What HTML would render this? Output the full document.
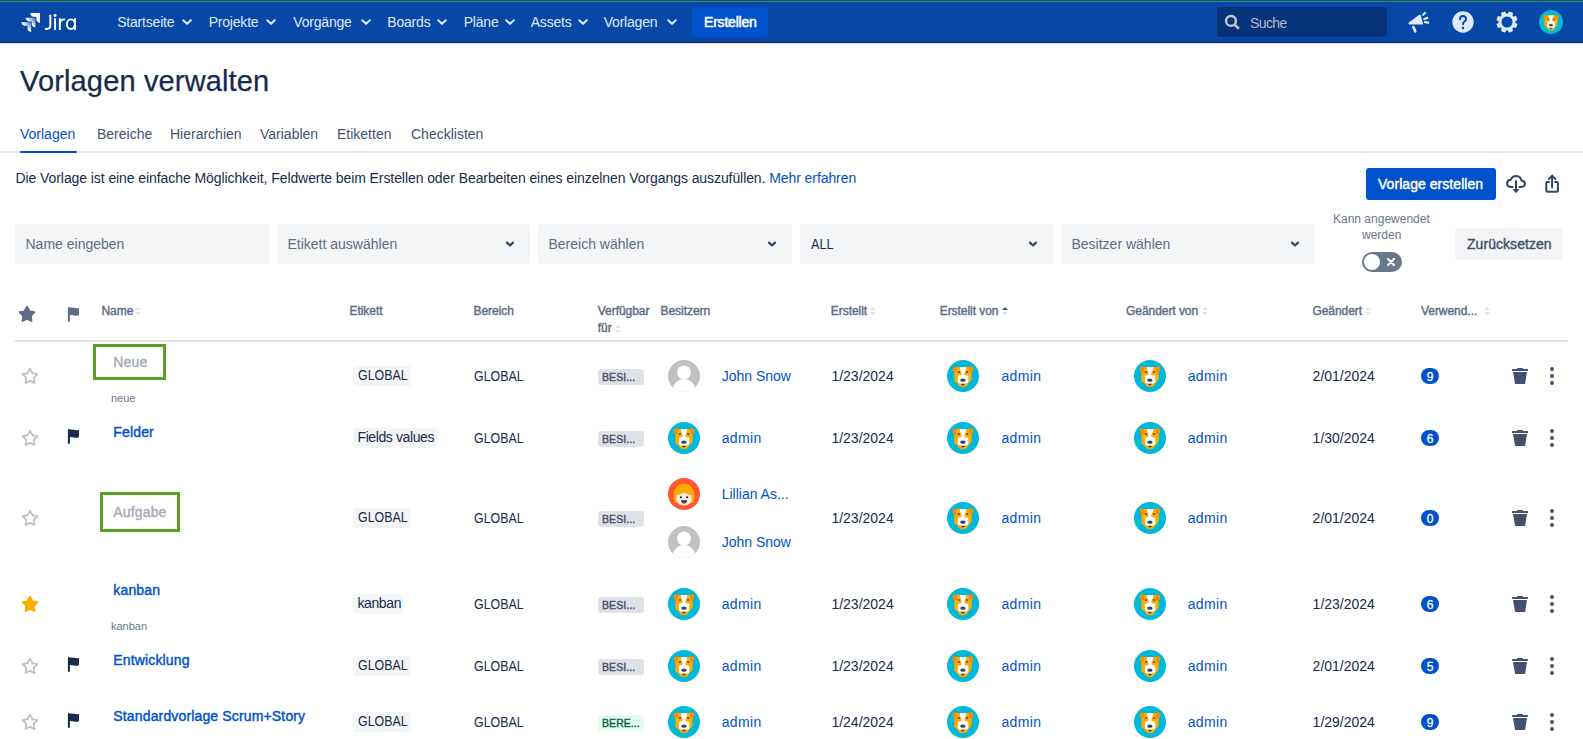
<!DOCTYPE html>
<html><head><meta charset="utf-8"><title>Vorlagen verwalten</title>
<style>
html,body{margin:0;padding:0;width:1583px;height:739px;overflow:hidden;background:#fff;}
body{position:relative;font-family:"Liberation Sans",sans-serif;}
.a{position:absolute;}
.t{position:absolute;white-space:nowrap;}
.tag{background:#F4F5F7;border-radius:3px;}
svg.a{overflow:visible;}
</style></head><body>
<svg width="0" height="0" style="position:absolute">
<defs>
<symbol id="dog" viewBox="0 0 32 32">
<circle cx="16" cy="16" r="16" fill="#00B8D9"/>
<path d="M8.4 7.1 L23.6 7.1 L24.7 12.5 L24.6 19.8 L21.2 23.6 L19.7 26.3 Q15.9 28 12.1 26.3 L10.7 23.6 L7.3 21.3 L7.3 12.5 Z" fill="#FFAB00"/>
<path d="M5.6 8.6 Q5.7 6.5 8.2 6.5 L10 6.8 L9.8 12.3 L7.2 12.3 Q5.6 11.5 5.6 8.6 Z" fill="#FF8B00"/>
<path d="M26.4 8.6 Q26.3 6.3 23.8 6.3 L22 6.8 L22.2 12.3 L24.8 12.3 Q26.4 11.5 26.4 8.6 Z" fill="#FF8B00"/>
<path d="M12.9 7.1 L19.2 7.1 L18.9 9.5 L17.4 12.7 L17.6 14.9 L21.3 15.8 L21.3 22.3 L19.6 23.6 L12.2 23.6 L10.9 22.3 L10.9 15.8 L14.4 14.9 L14.6 12.7 L13.2 9.5 Z" fill="#FFFFFF"/>
<rect x="10.9" y="10.9" width="2" height="2" rx="0.5" fill="#505F79"/>
<rect x="19.2" y="10.9" width="2" height="2" rx="0.5" fill="#505F79"/>
<ellipse cx="15.9" cy="20.2" rx="2.7" ry="1.6" fill="#344563"/>
<path d="M14.1 24.1 Q15.9 23.5 17.7 24.1 Q17 25.6 15.9 25.6 Q14.8 25.6 14.1 24.1 Z" fill="#344563"/>
</symbol>
<symbol id="user" viewBox="0 0 32 32">
<clipPath id="uc"><circle cx="16" cy="16" r="16"/></clipPath>
<circle cx="16" cy="16" r="16" fill="#C1C1C1"/>
<g clip-path="url(#uc)"><circle cx="16" cy="12.5" r="6.9" fill="#fff"/><ellipse cx="16" cy="30.6" rx="11.4" ry="11.6" fill="#fff"/></g>
</symbol>
<symbol id="lil" viewBox="0 0 32 32">
<circle cx="16" cy="16" r="16" fill="#FF5630"/>
<path d="M5.6 21 Q4.4 18.3 5.9 16 Q5 12.3 8.2 10.6 Q8.7 6.6 12.6 6.2 Q16 4.6 19.4 6.2 Q23.3 6.6 23.8 10.6 Q27 12.3 26.1 16 Q27.6 18.3 26.4 21 L25.2 24.8 L6.8 24.8 Z" fill="#FFAB00"/>
<path d="M8.3 17.2 Q11 16.8 13.6 15.8 L16 14.2 L18.4 15.8 Q21 16.8 23.7 17.2 L23.7 21 Q23.2 27.4 16 27.5 Q8.8 27.4 8.3 21 Z" fill="#FFEBE6"/>
<circle cx="12.9" cy="19.3" r="1.15" fill="#253858"/><circle cx="19.1" cy="19.3" r="1.15" fill="#253858"/>
<path d="M13.1 22.2 L19.1 22.2 Q18.8 25.4 16.1 25.4 Q13.4 25.4 13.1 22.2 Z" fill="#253858"/>
<path d="M14.6 24.5 Q16.1 23.3 17.6 24.5 Q16.9 25.4 16.1 25.4 Q15.3 25.4 14.6 24.5 Z" fill="#DE350B"/>
</symbol>
<symbol id="staro" viewBox="0 0 20 20">
<path d="M10.00 2.70 L12.57 7.30 L17.38 8.05 L13.85 11.80 L14.49 17.04 L10.00 14.90 L5.51 17.04 L6.15 11.80 L2.62 8.05 L7.43 7.30 Z" fill="none" stroke="#C1C1C1" stroke-width="1.8" stroke-linejoin="round"/>
</symbol>
<symbol id="jiralogo" viewBox="0 0 22 21">
<radialGradient id="jg1" cx="1" cy="0" r="1.0"><stop offset="0.15" stop-color="#fff" stop-opacity="0.35"/><stop offset="0.8" stop-color="#fff" stop-opacity="1"/></radialGradient>
<path d="M10 1.1 L19.9 1.1 L19.9 10.9 Q17.2 10.5 16.4 8.3 L16.4 5.6 Q16.4 4.7 15.5 4.7 L13.1 4.7 Q10.8 4.3 10 1.1 Z" fill="#fff"/>
<path d="M10 1.1 L19.9 1.1 L19.9 10.9 Q17.2 10.5 16.4 8.3 L16.4 5.6 Q16.4 4.7 15.5 4.7 L13.1 4.7 Q10.8 4.3 10 1.1 Z" transform="translate(-4.6 4.7)" fill="url(#jg1)"/>
<path d="M10 1.1 L19.9 1.1 L19.9 10.9 Q17.2 10.5 16.4 8.3 L16.4 5.6 Q16.4 4.7 15.5 4.7 L13.1 4.7 Q10.8 4.3 10 1.1 Z" transform="translate(-8.8 9.1)" fill="url(#jg1)"/>
</symbol>
<symbol id="megaphone" viewBox="0 0 30 26">
<path d="M4.8 13.6 L15 6 Q16.2 5.3 16.8 6.5 L19 14.4 Q19.2 15.6 18 15.6 L5.6 15.6 Q3.8 15.4 4.8 13.6 Z" fill="#DEEBFF"/>
<path d="M9.3 18 L11.3 22.4" stroke="#DEEBFF" stroke-width="2.6" stroke-linecap="round"/>
<path d="M19.1 5.8 L21.1 3.9 M20.3 10 L23.4 8.9 M20.9 13.1 L24.2 13.6" stroke="#DEEBFF" stroke-width="2.2" stroke-linecap="round"/>
</symbol>
<symbol id="gear" viewBox="0 0 22 22">
<g fill="#DEEBFF">
<circle cx="11" cy="11" r="8.5"/>

</g>
<g fill="#DEEBFF" transform="rotate(22.5 11 11)"><rect x="8.6" y="0.35" width="4.8" height="5" rx="1.2"/><rect x="8.6" y="16.65" width="4.8" height="5" rx="1.2"/><rect x="0.35" y="8.6" width="5" height="4.8" rx="1.2"/><rect x="16.65" y="8.6" width="5" height="4.8" rx="1.2"/></g>
<g fill="#DEEBFF" transform="rotate(67.5 11 11)"><rect x="8.6" y="0.35" width="4.8" height="5" rx="1.2"/><rect x="8.6" y="16.65" width="4.8" height="5" rx="1.2"/><rect x="0.35" y="8.6" width="5" height="4.8" rx="1.2"/><rect x="16.65" y="8.6" width="5" height="4.8" rx="1.2"/></g>
<circle cx="11" cy="11" r="5.55" fill="#0747A6"/>
</symbol>
<symbol id="cloud" viewBox="0 0 24 24">
<path d="M8.6 14.9 L6.6 14.9 Q3.1 14.7 3.1 11.2 Q3.3 7.8 6.8 7.7 Q8.3 3.9 12.3 3.9 Q16.6 4.1 17.4 8.4 Q21 9.1 21 12 Q20.8 14.9 17.4 14.9 L15.4 14.9" fill="none" stroke="#344563" stroke-width="2" stroke-linecap="round" stroke-linejoin="round"/>
<path d="M12 9 L12 18.6" stroke="#344563" stroke-width="2" stroke-linecap="round"/>
<path d="M9.2 17.4 L12 20.7 L14.8 17.4 Z" fill="#344563" stroke="#344563" stroke-width="0.9" stroke-linejoin="round"/>
</symbol>
<symbol id="share" viewBox="0 0 20 24">
<path d="M7 10 L5.3 10 Q4.3 10 4.3 11 L4.3 18.7 Q4.3 19.7 5.3 19.7 L14.9 19.7 Q15.9 19.7 15.9 18.7 L15.9 11 Q15.9 10 14.9 10 L13.2 10" fill="none" stroke="#344563" stroke-width="2" stroke-linecap="round" stroke-linejoin="round"/>
<path d="M10.1 4.2 L10.1 15.4" stroke="#344563" stroke-width="2" stroke-linecap="round"/>
<path d="M6.8 7.1 L10.1 3.6 L13.4 7.1" fill="none" stroke="#344563" stroke-width="2" stroke-linecap="round" stroke-linejoin="round"/>
</symbol>
</defs></svg>
<div class="a" style="left:0px;top:0px;width:1583px;height:43px;background:#0747A6;"></div>
<div class="a" style="left:0px;top:0px;width:1583px;height:1px;background:#035A5C;"></div>
<div class="a" style="left:0px;top:1px;width:1583px;height:1px;background:#3F8082;"></div>
<div class="a" style="left:0px;top:42px;width:1583px;height:1px;background:#1C2D55;"></div>
<div class="a" style="left:0px;top:43px;width:1583px;height:1px;background:#D9DADF;"></div>
<svg class="a" style="left:20px;top:12px;" width="22" height="21" viewBox="0 0 22 21"><use href="#jiralogo"/></svg>
<svg class="a" style="left:40px;top:8px;" width="44" height="28" viewBox="0 0 44 28"><g fill="none" stroke="#fff" stroke-width="1.95"><path d="M10.35 6.8 L10.35 17.6 Q10.35 21 6.9 21 L4.9 21"/><path d="M15.05 10.3 L15.05 22"/><path d="M19.85 10.3 L19.85 22 M19.85 15.6 Q19.85 11.35 25.2 11.35"/><ellipse cx="30.9" cy="16.15" rx="4.0" ry="4.8"/><path d="M35.0 10.3 L35.0 22"/></g><circle cx="15.1" cy="7.5" r="1.4" fill="#fff"/></svg>
<div class="t " style="left:117.2px;top:15.15px;font-size:14px;line-height:14px;color:#DEEBFF;font-weight:400;letter-spacing:-0.2px">Startseite</div>
<svg class="a" style="left:181px;top:16px" width="12" height="12" viewBox="0 0 12 12"><path d="M2.2 4.2 L6 7.8 L9.8 4.2" fill="none" stroke="#DEEBFF" stroke-width="2" stroke-linecap="round" stroke-linejoin="round"/></svg>
<div class="t " style="left:208.7px;top:15.15px;font-size:14px;line-height:14px;color:#DEEBFF;font-weight:400;letter-spacing:-0.2px">Projekte</div>
<svg class="a" style="left:265px;top:16px" width="12" height="12" viewBox="0 0 12 12"><path d="M2.2 4.2 L6 7.8 L9.8 4.2" fill="none" stroke="#DEEBFF" stroke-width="2" stroke-linecap="round" stroke-linejoin="round"/></svg>
<div class="t " style="left:293.3px;top:15.15px;font-size:14px;line-height:14px;color:#DEEBFF;font-weight:400;letter-spacing:-0.2px">Vorgänge</div>
<svg class="a" style="left:359.5px;top:16px" width="12" height="12" viewBox="0 0 12 12"><path d="M2.2 4.2 L6 7.8 L9.8 4.2" fill="none" stroke="#DEEBFF" stroke-width="2" stroke-linecap="round" stroke-linejoin="round"/></svg>
<div class="t " style="left:387.3px;top:15.15px;font-size:14px;line-height:14px;color:#DEEBFF;font-weight:400;letter-spacing:-0.2px">Boards</div>
<svg class="a" style="left:436px;top:16px" width="12" height="12" viewBox="0 0 12 12"><path d="M2.2 4.2 L6 7.8 L9.8 4.2" fill="none" stroke="#DEEBFF" stroke-width="2" stroke-linecap="round" stroke-linejoin="round"/></svg>
<div class="t " style="left:463.7px;top:15.15px;font-size:14px;line-height:14px;color:#DEEBFF;font-weight:400;letter-spacing:-0.2px">Pläne</div>
<svg class="a" style="left:503.5px;top:16px" width="12" height="12" viewBox="0 0 12 12"><path d="M2.2 4.2 L6 7.8 L9.8 4.2" fill="none" stroke="#DEEBFF" stroke-width="2" stroke-linecap="round" stroke-linejoin="round"/></svg>
<div class="t " style="left:530.7px;top:15.15px;font-size:14px;line-height:14px;color:#DEEBFF;font-weight:400;letter-spacing:-0.2px">Assets</div>
<svg class="a" style="left:576.5px;top:16px" width="12" height="12" viewBox="0 0 12 12"><path d="M2.2 4.2 L6 7.8 L9.8 4.2" fill="none" stroke="#DEEBFF" stroke-width="2" stroke-linecap="round" stroke-linejoin="round"/></svg>
<div class="t " style="left:603.7px;top:15.15px;font-size:14px;line-height:14px;color:#DEEBFF;font-weight:400;letter-spacing:-0.2px">Vorlagen</div>
<svg class="a" style="left:665.5px;top:16px" width="12" height="12" viewBox="0 0 12 12"><path d="M2.2 4.2 L6 7.8 L9.8 4.2" fill="none" stroke="#DEEBFF" stroke-width="2" stroke-linecap="round" stroke-linejoin="round"/></svg>
<div class="a" style="left:692px;top:7px;width:76px;height:30px;background:#0052CC;border-radius:3px"></div>
<div class="t " style="left:704px;top:15.15px;font-size:14px;line-height:14px;color:#FFFFFF;font-weight:400;-webkit-text-stroke-width:0.42px;letter-spacing:-0.2px;-webkit-text-stroke-width:0.5px">Erstellen</div>
<div class="a" style="left:1217px;top:7px;width:170px;height:30px;background:#07337A;border-radius:3px"></div>
<svg class="a" style="left:1223px;top:13px;" width="18" height="18" viewBox="0 0 18 18"><circle cx="8" cy="7.9" r="4.9" fill="none" stroke="#C1C7D0" stroke-width="2.5"/><path d="M11.7 11.6 L15.1 15" stroke="#C1C7D0" stroke-width="2.6" stroke-linecap="round"/></svg>
<div class="t " style="left:1250px;top:16.15px;font-size:14px;line-height:14px;color:#B3BAC5;font-weight:400;letter-spacing:-0.6px">Suche</div>
<svg class="a" style="left:1404px;top:9px;" width="30" height="26" viewBox="0 0 30 26"><use href="#megaphone"/></svg>
<svg class="a" style="left:1452px;top:11px;" width="22" height="22" viewBox="0 0 22 22"><circle cx="11" cy="11" r="10.7" fill="#DEEBFF"/><path d="M8 8.3 Q8.1 5.1 11 5.1 Q14 5.2 14 7.9 Q14 9.6 12.5 10.5 Q11 11.4 11 13.3" fill="none" stroke="#0747A6" stroke-width="2" stroke-linecap="round"/><circle cx="11" cy="16.9" r="1.25" fill="#0747A6"/></svg>
<svg class="a" style="left:1496px;top:11px;" width="22" height="22" viewBox="0 0 22 22"><use href="#gear"/></svg>
<svg class="a" style="left:1539.0px;top:10.0px" width="24" height="24" viewBox="0 0 32 32"><use href="#dog"/></svg>
<div class="t " style="left:20px;top:66.95px;font-size:29px;line-height:29px;color:#172B4D;font-weight:400;letter-spacing:0.15px;-webkit-text-stroke-width:0.25px">Vorlagen verwalten</div>
<div class="t " style="left:20px;top:126.65px;font-size:14px;line-height:14px;color:#0052CC;font-weight:400;">Vorlagen</div>
<div class="t " style="left:97px;top:126.65px;font-size:14px;line-height:14px;color:#42526E;font-weight:400;">Bereiche</div>
<div class="t " style="left:170px;top:126.65px;font-size:14px;line-height:14px;color:#42526E;font-weight:400;">Hierarchien</div>
<div class="t " style="left:260px;top:126.65px;font-size:14px;line-height:14px;color:#42526E;font-weight:400;">Variablen</div>
<div class="t " style="left:337px;top:126.65px;font-size:14px;line-height:14px;color:#42526E;font-weight:400;">Etiketten</div>
<div class="t " style="left:411px;top:126.65px;font-size:14px;line-height:14px;color:#42526E;font-weight:400;">Checklisten</div>
<div class="a" style="left:0px;top:151px;width:1583px;height:2px;background:#EBECF0;"></div>
<div class="a" style="left:20px;top:151px;width:57px;height:2px;background:#0052CC;border-radius:1px"></div>
<div class="t " style="left:15.5px;top:170.95px;font-size:14px;line-height:14px;color:#172B4D;font-weight:400;letter-spacing:-0.08px;white-space:nowrap">Die Vorlage ist eine einfache Möglichkeit, Feldwerte beim Erstellen oder Bearbeiten eines einzelnen Vorgangs auszufüllen. <span style="color:#0052CC">Mehr erfahren</span></div>
<div class="a" style="left:1366px;top:168px;width:130px;height:32px;background:#0052CC;border-radius:3px"></div>
<div class="t " style="left:1378px;top:177.15px;font-size:14px;line-height:14px;color:#FFFFFF;font-weight:400;-webkit-text-stroke-width:0.42px;letter-spacing:0.05px">Vorlage erstellen</div>
<svg class="a" style="left:1504px;top:172px;" width="24" height="24" viewBox="0 0 24 24"><use href="#cloud"/></svg>
<svg class="a" style="left:1542px;top:172px;" width="20" height="24" viewBox="0 0 20 24"><use href="#share"/></svg>
<div class="a" style="left:15px;top:224px;width:254px;height:40px;background:#F4F5F7;border-radius:3px"></div>
<div class="t " style="left:25.5px;top:237.15px;font-size:14px;line-height:14px;color:#5E6C84;font-weight:400;">Name eingeben</div>
<div class="a" style="left:277px;top:224px;width:253px;height:40px;background:#F4F5F7;border-radius:3px"></div>
<div class="t " style="left:287.5px;top:237.15px;font-size:14px;line-height:14px;color:#5E6C84;font-weight:400;">Etikett auswählen</div>
<svg class="a" style="left:504px;top:238px" width="12" height="12" viewBox="0 0 12 12"><path d="M3 4.6 L6 7.5 L9 4.6" fill="none" stroke="#344563" stroke-width="2.2" stroke-linecap="round" stroke-linejoin="round"/></svg>
<div class="a" style="left:538px;top:224px;width:254px;height:40px;background:#F4F5F7;border-radius:3px"></div>
<div class="t " style="left:548.5px;top:237.15px;font-size:14px;line-height:14px;color:#5E6C84;font-weight:400;">Bereich wählen</div>
<svg class="a" style="left:766px;top:238px" width="12" height="12" viewBox="0 0 12 12"><path d="M3 4.6 L6 7.5 L9 4.6" fill="none" stroke="#344563" stroke-width="2.2" stroke-linecap="round" stroke-linejoin="round"/></svg>
<div class="a" style="left:800px;top:224px;width:253px;height:40px;background:#F4F5F7;border-radius:3px"></div>
<div class="t " style="left:810.5px;top:237.15px;font-size:14px;line-height:14px;color:#172B4D;font-weight:400;transform:scaleX(0.9);transform-origin:0 0">ALL</div>
<svg class="a" style="left:1027px;top:238px" width="12" height="12" viewBox="0 0 12 12"><path d="M3 4.6 L6 7.5 L9 4.6" fill="none" stroke="#344563" stroke-width="2.2" stroke-linecap="round" stroke-linejoin="round"/></svg>
<div class="a" style="left:1061px;top:224px;width:254px;height:40px;background:#F4F5F7;border-radius:3px"></div>
<div class="t " style="left:1071.5px;top:237.15px;font-size:14px;line-height:14px;color:#5E6C84;font-weight:400;">Besitzer wählen</div>
<svg class="a" style="left:1289px;top:238px" width="12" height="12" viewBox="0 0 12 12"><path d="M3 4.6 L6 7.5 L9 4.6" fill="none" stroke="#344563" stroke-width="2.2" stroke-linecap="round" stroke-linejoin="round"/></svg>
<div class="t " style="left:1333px;top:212.54px;font-size:12px;line-height:12px;color:#6B778C;font-weight:400;">Kann angewendet</div>
<div class="t " style="left:1362px;top:228.64px;font-size:12px;line-height:12px;color:#6B778C;font-weight:400;">werden</div>
<div class="a" style="left:1362px;top:252px;width:40px;height:20px;background:#6B778C;border-radius:10px"></div>
<div class="a" style="left:1364px;top:254px;width:16px;height:16px;border-radius:50%;background:#fff"></div>
<svg class="a" style="left:1385px;top:256px;" width="12" height="12" viewBox="0 0 12 12"><path d="M3 3 L9 9 M9 3 L3 9" stroke="#fff" stroke-width="2.1" stroke-linecap="round"/></svg>
<div class="a" style="left:1455px;top:228px;width:108px;height:31.5px;background:#F4F5F7;border-radius:3px"></div>
<div class="t " style="left:1467px;top:237.15px;font-size:14px;line-height:14px;color:#42526E;font-weight:400;-webkit-text-stroke-width:0.42px;letter-spacing:0.05px">Zurücksetzen</div>
<svg class="a" style="left:17px;top:304px" width="20" height="20" viewBox="0 0 20 20"><path d="M10.00 2.70 L12.57 7.30 L17.38 8.05 L13.85 11.80 L14.49 17.04 L10.00 14.90 L5.51 17.04 L6.15 11.80 L2.62 8.05 L7.43 7.30 Z" fill="#5E6C84" stroke="#5E6C84" stroke-width="1.8" stroke-linejoin="round"/></svg>
<svg class="a" style="left:67.5px;top:306.5px" width="12" height="15" viewBox="0 0 12 15"><path d="M0.9 1 L0.9 14" stroke="#5E6C84" stroke-width="2" stroke-linecap="round"/><path d="M0.9 0.6 Q3 0.2 6 0.8 Q9 1.4 11 0.9 L11 8.3 Q9 8.9 6 8.4 Q3 7.8 0.9 8.2 Z" fill="#5E6C84"/></svg>
<div class="t hd" style="left:101.5px;top:304.84px;font-size:12px;line-height:12px;color:#5E6C84;font-weight:400;-webkit-text-stroke-width:0.42px;letter-spacing:-0.05px">Name</div>
<div class="t hd" style="left:349.5px;top:304.84px;font-size:12px;line-height:12px;color:#5E6C84;font-weight:400;-webkit-text-stroke-width:0.42px;letter-spacing:-0.05px">Etikett</div>
<div class="t hd" style="left:473.5px;top:304.84px;font-size:12px;line-height:12px;color:#5E6C84;font-weight:400;-webkit-text-stroke-width:0.42px;letter-spacing:-0.05px">Bereich</div>
<div class="t hd" style="left:597.8px;top:304.84px;font-size:12px;line-height:12px;color:#5E6C84;font-weight:400;-webkit-text-stroke-width:0.42px;letter-spacing:-0.05px">Verfügbar</div>
<div class="t hd" style="left:660.5px;top:304.84px;font-size:12px;line-height:12px;color:#5E6C84;font-weight:400;-webkit-text-stroke-width:0.42px;letter-spacing:-0.05px">Besitzern</div>
<div class="t hd" style="left:830.8px;top:304.84px;font-size:12px;line-height:12px;color:#5E6C84;font-weight:400;-webkit-text-stroke-width:0.42px;letter-spacing:-0.05px">Erstellt</div>
<div class="t hd" style="left:939.7px;top:304.84px;font-size:12px;line-height:12px;color:#5E6C84;font-weight:400;-webkit-text-stroke-width:0.42px;letter-spacing:-0.05px">Erstellt von</div>
<div class="t hd" style="left:1126px;top:304.84px;font-size:12px;line-height:12px;color:#5E6C84;font-weight:400;-webkit-text-stroke-width:0.42px;letter-spacing:-0.05px">Geändert von</div>
<div class="t hd" style="left:1312.4px;top:304.84px;font-size:12px;line-height:12px;color:#5E6C84;font-weight:400;-webkit-text-stroke-width:0.42px;letter-spacing:-0.05px">Geändert</div>
<div class="t hd" style="left:1421px;top:304.84px;font-size:12px;line-height:12px;color:#5E6C84;font-weight:400;-webkit-text-stroke-width:0.42px;letter-spacing:-0.05px">Verwend...</div>
<div class="t " style="left:597.8px;top:322.24px;font-size:12px;line-height:12px;color:#5E6C84;font-weight:400;-webkit-text-stroke-width:0.42px;letter-spacing:-0.05px">für</div>
<svg class="a" style="left:134px;top:306px" width="8" height="10" viewBox="0 0 8 10"><path d="M1 4 L4 1 L7 4 Z" fill="#DFE1E6"/><path d="M1 6 L4 9 L7 6 Z" fill="#DFE1E6"/></svg>
<svg class="a" style="left:614px;top:324px" width="8" height="10" viewBox="0 0 8 10"><path d="M1 4 L4 1 L7 4 Z" fill="#DFE1E6"/><path d="M1 6 L4 9 L7 6 Z" fill="#DFE1E6"/></svg>
<svg class="a" style="left:869px;top:306px" width="8" height="10" viewBox="0 0 8 10"><path d="M1 4 L4 1 L7 4 Z" fill="#DFE1E6"/><path d="M1 6 L4 9 L7 6 Z" fill="#DFE1E6"/></svg>
<svg class="a" style="left:1001px;top:306px" width="8" height="10" viewBox="0 0 8 10"><path d="M1 4 L4 1 L7 4 Z" fill="#42526E"/><path d="M1 6 L4 9 L7 6 Z" fill="#DFE1E6"/></svg>
<svg class="a" style="left:1201px;top:306px" width="8" height="10" viewBox="0 0 8 10"><path d="M1 4 L4 1 L7 4 Z" fill="#DFE1E6"/><path d="M1 6 L4 9 L7 6 Z" fill="#DFE1E6"/></svg>
<svg class="a" style="left:1364px;top:306px" width="8" height="10" viewBox="0 0 8 10"><path d="M1 4 L4 1 L7 4 Z" fill="#DFE1E6"/><path d="M1 6 L4 9 L7 6 Z" fill="#DFE1E6"/></svg>
<svg class="a" style="left:1483px;top:306px" width="8" height="10" viewBox="0 0 8 10"><path d="M1 4 L4 1 L7 4 Z" fill="#DFE1E6"/><path d="M1 6 L4 9 L7 6 Z" fill="#DFE1E6"/></svg>
<div class="a" style="left:15px;top:340px;width:1553px;height:2px;background:#DFE1E6;"></div>
<svg class="a" style="left:20px;top:366px" width="20" height="20" viewBox="0 0 20 20"><use href="#staro"/></svg>
<div class="a" style="left:93px;top:344px;width:67px;height:30px;border:3px solid #5B9F24"></div>
<div class="t " style="left:113.3px;top:355.15px;font-size:14px;line-height:14px;color:#A5ADBA;font-weight:400;-webkit-text-stroke-width:0.42px;letter-spacing:0.15px">Neue</div>
<div class="t " style="left:111px;top:393.09px;font-size:11px;line-height:11px;color:#6B778C;font-weight:400;">neue</div>
<div class="a tag" style="left:352.7px;top:366px;width:58px;height:19.5px;"></div>
<div class="t " style="left:357.5px;top:368.05px;font-size:14px;line-height:14px;color:#172B4D;font-weight:400;transform:scaleX(0.885);transform-origin:0 0">GLOBAL</div>
<div class="t " style="left:473.7px;top:368.75px;font-size:14px;line-height:14px;color:#172B4D;font-weight:400;transform:scaleX(0.885);transform-origin:0 0">GLOBAL</div>
<div class="a" style="left:598px;top:369px;width:46px;height:15.5px;background:#DFE1E6;border-radius:3px"></div>
<div class="t " style="left:602px;top:371.79px;font-size:11px;line-height:11px;color:#42526E;font-weight:400;-webkit-text-stroke-width:0.42px;transform:scaleX(0.95);transform-origin:0 0;letter-spacing:0.1px">BESI...</div>
<svg class="a" style="left:668.0px;top:360.0px" width="32" height="32" viewBox="0 0 32 32"><use href="#user"/></svg>
<div class="t " style="left:721.7px;top:368.75px;font-size:14px;line-height:14px;color:#0052CC;font-weight:400;">John Snow</div>
<div class="t " style="left:831.4px;top:368.75px;font-size:14px;line-height:14px;color:#172B4D;font-weight:400;">1/23/2024</div>
<svg class="a" style="left:947.0px;top:360.0px" width="32" height="32" viewBox="0 0 32 32"><use href="#dog"/></svg>
<div class="t " style="left:1001.4px;top:368.75px;font-size:14px;line-height:14px;color:#0052CC;font-weight:400;letter-spacing:0.35px">admin</div>
<svg class="a" style="left:1134.0px;top:360.0px" width="32" height="32" viewBox="0 0 32 32"><use href="#dog"/></svg>
<div class="t " style="left:1187.7px;top:368.75px;font-size:14px;line-height:14px;color:#0052CC;font-weight:400;letter-spacing:0.35px">admin</div>
<div class="t " style="left:1312.6px;top:368.75px;font-size:14px;line-height:14px;color:#172B4D;font-weight:400;">2/01/2024</div>
<div class="a" style="left:1421px;top:367.7px;width:18px;height:16px;background:#0052CC;border-radius:8px"></div>
<div class="t" style="left:1421px;top:368.6px;width:18px;text-align:center;font-size:12px;line-height:16px;color:#fff;font-weight:400;-webkit-text-stroke-width:0.3px">9</div>
<svg class="a" style="left:1512px;top:368px" width="16" height="18" viewBox="0 0 16 18"><rect x="5" y="0" width="6" height="1.8" rx="0.6" fill="#42526E"/><rect x="0" y="1" width="16" height="2" rx="0.7" fill="#42526E"/><path d="M1 4 L15 4 L13.1 16 L3.1 16 Z" fill="#42526E"/></svg>
<svg class="a" style="left:1548px;top:366px" width="8" height="20" viewBox="0 0 8 20"><circle cx="4" cy="2.9" r="2" fill="#42526E"/><circle cx="4" cy="10" r="2" fill="#42526E"/><circle cx="4" cy="17" r="2" fill="#42526E"/></svg>
<svg class="a" style="left:20px;top:428px" width="20" height="20" viewBox="0 0 20 20"><use href="#staro"/></svg>
<svg class="a" style="left:67.8px;top:428.5px" width="12" height="15" viewBox="0 0 12 15"><path d="M0.9 1 L0.9 14" stroke="#172B4D" stroke-width="2" stroke-linecap="round"/><path d="M0.9 0.6 Q3 0.2 6 0.8 Q9 1.4 11 0.9 L11 8.3 Q9 8.9 6 8.4 Q3 7.8 0.9 8.2 Z" fill="#172B4D"/></svg>
<div class="t " style="left:113.3px;top:425.35px;font-size:14px;line-height:14px;color:#0052CC;font-weight:400;-webkit-text-stroke-width:0.42px;letter-spacing:0.15px">Felder</div>
<div class="a tag" style="left:352.7px;top:428px;width:84.5px;height:19.5px;"></div>
<div class="t " style="left:357.5px;top:430.05px;font-size:14px;line-height:14px;color:#172B4D;font-weight:400;letter-spacing:-0.4px">Fields values</div>
<div class="t " style="left:473.7px;top:430.75px;font-size:14px;line-height:14px;color:#172B4D;font-weight:400;transform:scaleX(0.885);transform-origin:0 0">GLOBAL</div>
<div class="a" style="left:598px;top:431px;width:46px;height:15.5px;background:#DFE1E6;border-radius:3px"></div>
<div class="t " style="left:602px;top:433.79px;font-size:11px;line-height:11px;color:#42526E;font-weight:400;-webkit-text-stroke-width:0.42px;transform:scaleX(0.95);transform-origin:0 0;letter-spacing:0.1px">BESI...</div>
<svg class="a" style="left:668.0px;top:422.0px" width="32" height="32" viewBox="0 0 32 32"><use href="#dog"/></svg>
<div class="t " style="left:721.7px;top:430.75px;font-size:14px;line-height:14px;color:#0052CC;font-weight:400;letter-spacing:0.35px">admin</div>
<div class="t " style="left:831.4px;top:430.75px;font-size:14px;line-height:14px;color:#172B4D;font-weight:400;">1/23/2024</div>
<svg class="a" style="left:947.0px;top:422.0px" width="32" height="32" viewBox="0 0 32 32"><use href="#dog"/></svg>
<div class="t " style="left:1001.4px;top:430.75px;font-size:14px;line-height:14px;color:#0052CC;font-weight:400;letter-spacing:0.35px">admin</div>
<svg class="a" style="left:1134.0px;top:422.0px" width="32" height="32" viewBox="0 0 32 32"><use href="#dog"/></svg>
<div class="t " style="left:1187.7px;top:430.75px;font-size:14px;line-height:14px;color:#0052CC;font-weight:400;letter-spacing:0.35px">admin</div>
<div class="t " style="left:1312.6px;top:430.75px;font-size:14px;line-height:14px;color:#172B4D;font-weight:400;">1/30/2024</div>
<div class="a" style="left:1421px;top:429.7px;width:18px;height:16px;background:#0052CC;border-radius:8px"></div>
<div class="t" style="left:1421px;top:430.6px;width:18px;text-align:center;font-size:12px;line-height:16px;color:#fff;font-weight:400;-webkit-text-stroke-width:0.3px">6</div>
<svg class="a" style="left:1512px;top:430px" width="16" height="18" viewBox="0 0 16 18"><rect x="5" y="0" width="6" height="1.8" rx="0.6" fill="#42526E"/><rect x="0" y="1" width="16" height="2" rx="0.7" fill="#42526E"/><path d="M1 4 L15 4 L13.1 16 L3.1 16 Z" fill="#42526E"/></svg>
<svg class="a" style="left:1548px;top:428px" width="8" height="20" viewBox="0 0 8 20"><circle cx="4" cy="2.9" r="2" fill="#42526E"/><circle cx="4" cy="10" r="2" fill="#42526E"/><circle cx="4" cy="17" r="2" fill="#42526E"/></svg>
<svg class="a" style="left:20px;top:508px" width="20" height="20" viewBox="0 0 20 20"><use href="#staro"/></svg>
<div class="a" style="left:100px;top:492px;width:74px;height:34px;border:3px solid #5B9F24"></div>
<div class="t " style="left:113.3px;top:505.15px;font-size:14px;line-height:14px;color:#A5ADBA;font-weight:400;-webkit-text-stroke-width:0.42px;letter-spacing:0.15px">Aufgabe</div>
<div class="a tag" style="left:352.7px;top:508px;width:58px;height:19.5px;"></div>
<div class="t " style="left:357.5px;top:510.05px;font-size:14px;line-height:14px;color:#172B4D;font-weight:400;transform:scaleX(0.885);transform-origin:0 0">GLOBAL</div>
<div class="t " style="left:473.7px;top:510.75px;font-size:14px;line-height:14px;color:#172B4D;font-weight:400;transform:scaleX(0.885);transform-origin:0 0">GLOBAL</div>
<div class="a" style="left:598px;top:511px;width:46px;height:15.5px;background:#DFE1E6;border-radius:3px"></div>
<div class="t " style="left:602px;top:513.79px;font-size:11px;line-height:11px;color:#42526E;font-weight:400;-webkit-text-stroke-width:0.42px;transform:scaleX(0.95);transform-origin:0 0;letter-spacing:0.1px">BESI...</div>
<svg class="a" style="left:668.0px;top:478.0px" width="32" height="32" viewBox="0 0 32 32"><use href="#lil"/></svg>
<div class="t " style="left:721.7px;top:486.75px;font-size:14px;line-height:14px;color:#0052CC;font-weight:400;">Lillian As...</div>
<svg class="a" style="left:668.0px;top:526.0px" width="32" height="32" viewBox="0 0 32 32"><use href="#user"/></svg>
<div class="t " style="left:721.7px;top:534.75px;font-size:14px;line-height:14px;color:#0052CC;font-weight:400;">John Snow</div>
<div class="t " style="left:831.4px;top:510.75px;font-size:14px;line-height:14px;color:#172B4D;font-weight:400;">1/23/2024</div>
<svg class="a" style="left:947.0px;top:502.0px" width="32" height="32" viewBox="0 0 32 32"><use href="#dog"/></svg>
<div class="t " style="left:1001.4px;top:510.75px;font-size:14px;line-height:14px;color:#0052CC;font-weight:400;letter-spacing:0.35px">admin</div>
<svg class="a" style="left:1134.0px;top:502.0px" width="32" height="32" viewBox="0 0 32 32"><use href="#dog"/></svg>
<div class="t " style="left:1187.7px;top:510.75px;font-size:14px;line-height:14px;color:#0052CC;font-weight:400;letter-spacing:0.35px">admin</div>
<div class="t " style="left:1312.6px;top:510.75px;font-size:14px;line-height:14px;color:#172B4D;font-weight:400;">2/01/2024</div>
<div class="a" style="left:1421px;top:509.7px;width:18px;height:16px;background:#0052CC;border-radius:8px"></div>
<div class="t" style="left:1421px;top:510.6px;width:18px;text-align:center;font-size:12px;line-height:16px;color:#fff;font-weight:400;-webkit-text-stroke-width:0.3px">0</div>
<svg class="a" style="left:1512px;top:510px" width="16" height="18" viewBox="0 0 16 18"><rect x="5" y="0" width="6" height="1.8" rx="0.6" fill="#42526E"/><rect x="0" y="1" width="16" height="2" rx="0.7" fill="#42526E"/><path d="M1 4 L15 4 L13.1 16 L3.1 16 Z" fill="#42526E"/></svg>
<svg class="a" style="left:1548px;top:508px" width="8" height="20" viewBox="0 0 8 20"><circle cx="4" cy="2.9" r="2" fill="#42526E"/><circle cx="4" cy="10" r="2" fill="#42526E"/><circle cx="4" cy="17" r="2" fill="#42526E"/></svg>
<svg class="a" style="left:20px;top:594px" width="20" height="20" viewBox="0 0 20 20"><path d="M10.00 2.70 L12.57 7.30 L17.38 8.05 L13.85 11.80 L14.49 17.04 L10.00 14.90 L5.51 17.04 L6.15 11.80 L2.62 8.05 L7.43 7.30 Z" fill="#FFAB00" stroke="#FFAB00" stroke-width="1.8" stroke-linejoin="round"/></svg>
<div class="t " style="left:113.3px;top:583.15px;font-size:14px;line-height:14px;color:#0052CC;font-weight:400;-webkit-text-stroke-width:0.42px;letter-spacing:0.15px">kanban</div>
<div class="t " style="left:111px;top:621.49px;font-size:11px;line-height:11px;color:#6B778C;font-weight:400;">kanban</div>
<div class="a tag" style="left:352.7px;top:594px;width:50px;height:19.5px;"></div>
<div class="t " style="left:357.5px;top:596.05px;font-size:14px;line-height:14px;color:#172B4D;font-weight:400;letter-spacing:-0.4px">kanban</div>
<div class="t " style="left:473.7px;top:596.75px;font-size:14px;line-height:14px;color:#172B4D;font-weight:400;transform:scaleX(0.885);transform-origin:0 0">GLOBAL</div>
<div class="a" style="left:598px;top:597px;width:46px;height:15.5px;background:#DFE1E6;border-radius:3px"></div>
<div class="t " style="left:602px;top:599.79px;font-size:11px;line-height:11px;color:#42526E;font-weight:400;-webkit-text-stroke-width:0.42px;transform:scaleX(0.95);transform-origin:0 0;letter-spacing:0.1px">BESI...</div>
<svg class="a" style="left:668.0px;top:588.0px" width="32" height="32" viewBox="0 0 32 32"><use href="#dog"/></svg>
<div class="t " style="left:721.7px;top:596.75px;font-size:14px;line-height:14px;color:#0052CC;font-weight:400;letter-spacing:0.35px">admin</div>
<div class="t " style="left:831.4px;top:596.75px;font-size:14px;line-height:14px;color:#172B4D;font-weight:400;">1/23/2024</div>
<svg class="a" style="left:947.0px;top:588.0px" width="32" height="32" viewBox="0 0 32 32"><use href="#dog"/></svg>
<div class="t " style="left:1001.4px;top:596.75px;font-size:14px;line-height:14px;color:#0052CC;font-weight:400;letter-spacing:0.35px">admin</div>
<svg class="a" style="left:1134.0px;top:588.0px" width="32" height="32" viewBox="0 0 32 32"><use href="#dog"/></svg>
<div class="t " style="left:1187.7px;top:596.75px;font-size:14px;line-height:14px;color:#0052CC;font-weight:400;letter-spacing:0.35px">admin</div>
<div class="t " style="left:1312.6px;top:596.75px;font-size:14px;line-height:14px;color:#172B4D;font-weight:400;">1/23/2024</div>
<div class="a" style="left:1421px;top:595.7px;width:18px;height:16px;background:#0052CC;border-radius:8px"></div>
<div class="t" style="left:1421px;top:596.6px;width:18px;text-align:center;font-size:12px;line-height:16px;color:#fff;font-weight:400;-webkit-text-stroke-width:0.3px">6</div>
<svg class="a" style="left:1512px;top:596px" width="16" height="18" viewBox="0 0 16 18"><rect x="5" y="0" width="6" height="1.8" rx="0.6" fill="#42526E"/><rect x="0" y="1" width="16" height="2" rx="0.7" fill="#42526E"/><path d="M1 4 L15 4 L13.1 16 L3.1 16 Z" fill="#42526E"/></svg>
<svg class="a" style="left:1548px;top:594px" width="8" height="20" viewBox="0 0 8 20"><circle cx="4" cy="2.9" r="2" fill="#42526E"/><circle cx="4" cy="10" r="2" fill="#42526E"/><circle cx="4" cy="17" r="2" fill="#42526E"/></svg>
<svg class="a" style="left:20px;top:656px" width="20" height="20" viewBox="0 0 20 20"><use href="#staro"/></svg>
<svg class="a" style="left:67.8px;top:656.5px" width="12" height="15" viewBox="0 0 12 15"><path d="M0.9 1 L0.9 14" stroke="#172B4D" stroke-width="2" stroke-linecap="round"/><path d="M0.9 0.6 Q3 0.2 6 0.8 Q9 1.4 11 0.9 L11 8.3 Q9 8.9 6 8.4 Q3 7.8 0.9 8.2 Z" fill="#172B4D"/></svg>
<div class="t " style="left:113.3px;top:653.15px;font-size:14px;line-height:14px;color:#0052CC;font-weight:400;-webkit-text-stroke-width:0.42px;letter-spacing:0.15px">Entwicklung</div>
<div class="a tag" style="left:352.7px;top:656px;width:58px;height:19.5px;"></div>
<div class="t " style="left:357.5px;top:658.05px;font-size:14px;line-height:14px;color:#172B4D;font-weight:400;transform:scaleX(0.885);transform-origin:0 0">GLOBAL</div>
<div class="t " style="left:473.7px;top:658.75px;font-size:14px;line-height:14px;color:#172B4D;font-weight:400;transform:scaleX(0.885);transform-origin:0 0">GLOBAL</div>
<div class="a" style="left:598px;top:659px;width:46px;height:15.5px;background:#DFE1E6;border-radius:3px"></div>
<div class="t " style="left:602px;top:661.79px;font-size:11px;line-height:11px;color:#42526E;font-weight:400;-webkit-text-stroke-width:0.42px;transform:scaleX(0.95);transform-origin:0 0;letter-spacing:0.1px">BESI...</div>
<svg class="a" style="left:668.0px;top:650.0px" width="32" height="32" viewBox="0 0 32 32"><use href="#dog"/></svg>
<div class="t " style="left:721.7px;top:658.75px;font-size:14px;line-height:14px;color:#0052CC;font-weight:400;letter-spacing:0.35px">admin</div>
<div class="t " style="left:831.4px;top:658.75px;font-size:14px;line-height:14px;color:#172B4D;font-weight:400;">1/23/2024</div>
<svg class="a" style="left:947.0px;top:650.0px" width="32" height="32" viewBox="0 0 32 32"><use href="#dog"/></svg>
<div class="t " style="left:1001.4px;top:658.75px;font-size:14px;line-height:14px;color:#0052CC;font-weight:400;letter-spacing:0.35px">admin</div>
<svg class="a" style="left:1134.0px;top:650.0px" width="32" height="32" viewBox="0 0 32 32"><use href="#dog"/></svg>
<div class="t " style="left:1187.7px;top:658.75px;font-size:14px;line-height:14px;color:#0052CC;font-weight:400;letter-spacing:0.35px">admin</div>
<div class="t " style="left:1312.6px;top:658.75px;font-size:14px;line-height:14px;color:#172B4D;font-weight:400;">2/01/2024</div>
<div class="a" style="left:1421px;top:657.7px;width:18px;height:16px;background:#0052CC;border-radius:8px"></div>
<div class="t" style="left:1421px;top:658.6px;width:18px;text-align:center;font-size:12px;line-height:16px;color:#fff;font-weight:400;-webkit-text-stroke-width:0.3px">5</div>
<svg class="a" style="left:1512px;top:658px" width="16" height="18" viewBox="0 0 16 18"><rect x="5" y="0" width="6" height="1.8" rx="0.6" fill="#42526E"/><rect x="0" y="1" width="16" height="2" rx="0.7" fill="#42526E"/><path d="M1 4 L15 4 L13.1 16 L3.1 16 Z" fill="#42526E"/></svg>
<svg class="a" style="left:1548px;top:656px" width="8" height="20" viewBox="0 0 8 20"><circle cx="4" cy="2.9" r="2" fill="#42526E"/><circle cx="4" cy="10" r="2" fill="#42526E"/><circle cx="4" cy="17" r="2" fill="#42526E"/></svg>
<svg class="a" style="left:20px;top:712px" width="20" height="20" viewBox="0 0 20 20"><use href="#staro"/></svg>
<svg class="a" style="left:67.8px;top:712.5px" width="12" height="15" viewBox="0 0 12 15"><path d="M0.9 1 L0.9 14" stroke="#172B4D" stroke-width="2" stroke-linecap="round"/><path d="M0.9 0.6 Q3 0.2 6 0.8 Q9 1.4 11 0.9 L11 8.3 Q9 8.9 6 8.4 Q3 7.8 0.9 8.2 Z" fill="#172B4D"/></svg>
<div class="t " style="left:113.3px;top:709.15px;font-size:14px;line-height:14px;color:#0052CC;font-weight:400;-webkit-text-stroke-width:0.42px;letter-spacing:0.15px">Standardvorlage Scrum+Story</div>
<div class="a tag" style="left:352.7px;top:712px;width:58px;height:19.5px;"></div>
<div class="t " style="left:357.5px;top:714.05px;font-size:14px;line-height:14px;color:#172B4D;font-weight:400;transform:scaleX(0.885);transform-origin:0 0">GLOBAL</div>
<div class="t " style="left:473.7px;top:714.75px;font-size:14px;line-height:14px;color:#172B4D;font-weight:400;transform:scaleX(0.885);transform-origin:0 0">GLOBAL</div>
<div class="a" style="left:598px;top:715px;width:46px;height:15.5px;background:#E3FCEF;border-radius:3px"></div>
<div class="t " style="left:602px;top:717.79px;font-size:11px;line-height:11px;color:#006644;font-weight:400;-webkit-text-stroke-width:0.42px;transform:scaleX(0.95);transform-origin:0 0;letter-spacing:0.1px">BERE...</div>
<svg class="a" style="left:668.0px;top:706.0px" width="32" height="32" viewBox="0 0 32 32"><use href="#dog"/></svg>
<div class="t " style="left:721.7px;top:714.75px;font-size:14px;line-height:14px;color:#0052CC;font-weight:400;letter-spacing:0.35px">admin</div>
<div class="t " style="left:831.4px;top:714.75px;font-size:14px;line-height:14px;color:#172B4D;font-weight:400;">1/24/2024</div>
<svg class="a" style="left:947.0px;top:706.0px" width="32" height="32" viewBox="0 0 32 32"><use href="#dog"/></svg>
<div class="t " style="left:1001.4px;top:714.75px;font-size:14px;line-height:14px;color:#0052CC;font-weight:400;letter-spacing:0.35px">admin</div>
<svg class="a" style="left:1134.0px;top:706.0px" width="32" height="32" viewBox="0 0 32 32"><use href="#dog"/></svg>
<div class="t " style="left:1187.7px;top:714.75px;font-size:14px;line-height:14px;color:#0052CC;font-weight:400;letter-spacing:0.35px">admin</div>
<div class="t " style="left:1312.6px;top:714.75px;font-size:14px;line-height:14px;color:#172B4D;font-weight:400;">1/29/2024</div>
<div class="a" style="left:1421px;top:713.7px;width:18px;height:16px;background:#0052CC;border-radius:8px"></div>
<div class="t" style="left:1421px;top:714.6px;width:18px;text-align:center;font-size:12px;line-height:16px;color:#fff;font-weight:400;-webkit-text-stroke-width:0.3px">9</div>
<svg class="a" style="left:1512px;top:714px" width="16" height="18" viewBox="0 0 16 18"><rect x="5" y="0" width="6" height="1.8" rx="0.6" fill="#42526E"/><rect x="0" y="1" width="16" height="2" rx="0.7" fill="#42526E"/><path d="M1 4 L15 4 L13.1 16 L3.1 16 Z" fill="#42526E"/></svg>
<svg class="a" style="left:1548px;top:712px" width="8" height="20" viewBox="0 0 8 20"><circle cx="4" cy="2.9" r="2" fill="#42526E"/><circle cx="4" cy="10" r="2" fill="#42526E"/><circle cx="4" cy="17" r="2" fill="#42526E"/></svg>
</body></html>
